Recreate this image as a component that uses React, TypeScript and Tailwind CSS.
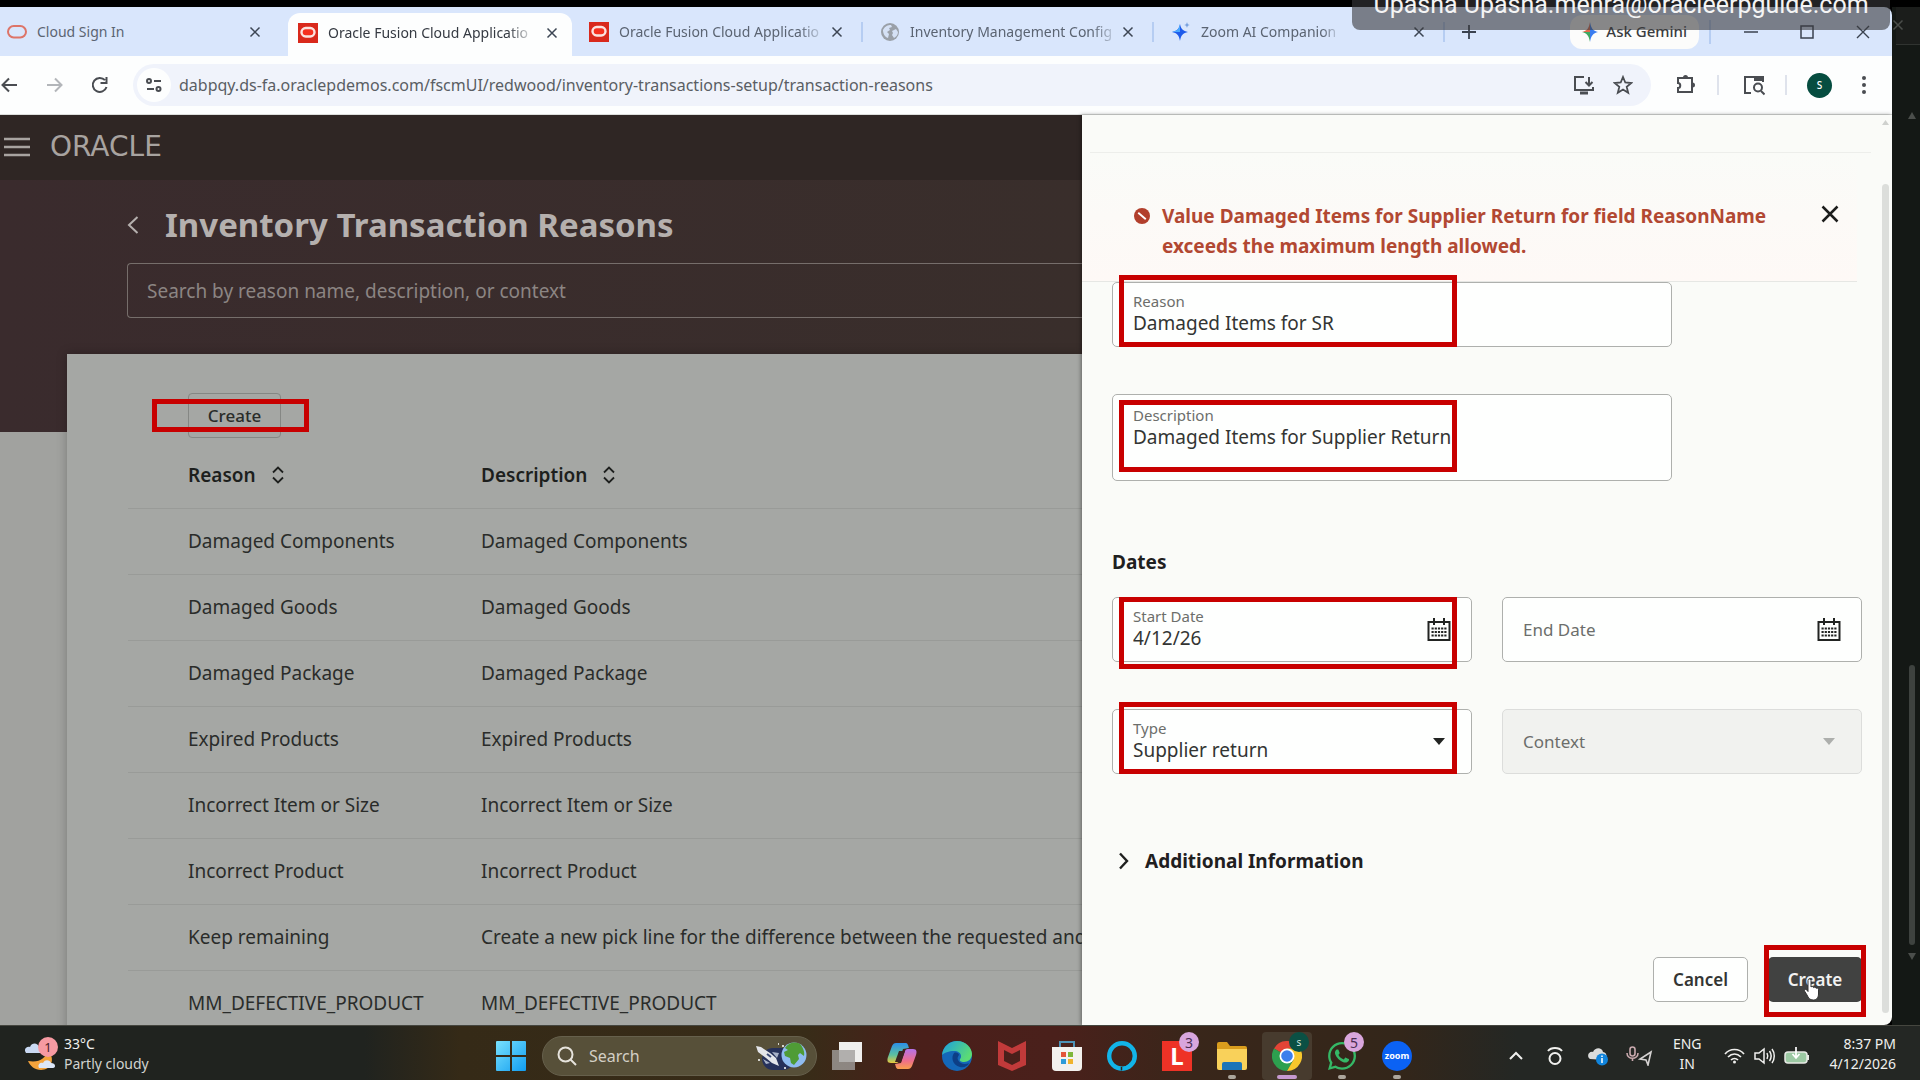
import type { ReactNode } from "react";
import { FaWhatsapp } from "react-icons/fa";

const reasons = [
  ["Damaged Components", "Damaged Components"],
  ["Damaged Goods", "Damaged Goods"],
  ["Damaged Package", "Damaged Package"],
  ["Expired Products", "Expired Products"],
  ["Incorrect Item or Size", "Incorrect Item or Size"],
  ["Incorrect Product", "Incorrect Product"],
  ["Keep remaining", "Create a new pick line for the difference between the requested and picked quantity"],
  ["MM_DEFECTIVE_PRODUCT", "MM_DEFECTIVE_PRODUCT"],
];

function OracleFavicon() {
  return (
    <svg className="h-5 w-5 shrink-0" viewBox="0 0 20 20" aria-hidden="true">
      <rect width="20" height="20" fill="#d9291c" />
      <rect x="3.5" y="5" width="13" height="8.500" rx="4.250" fill="#f5301f" stroke="#fbe3df" strokeWidth="2.400" />
    </svg>
  );
}

function OracleRing() {
  return (
    <svg className="h-5 w-5 shrink-0" viewBox="0 0 20 20" aria-hidden="true">
      <rect x="1" y="4" width="18" height="11.500" rx="5.750" fill="none" stroke="#dd7468" strokeWidth="2" />
    </svg>
  );
}

function Globe() {
  return (
    <svg className="h-5 w-5 shrink-0" viewBox="0 0 20 20" aria-hidden="true">
      <circle cx="10" cy="10" r="9" fill="#9aa0a8" />
      <path d="M3 8c2-4 5-5 8-5l1 2-3 1 1 2-3 2 2 2-1 4c-3-1-5-4-5-8zM12 9l4-2 2 3c0 3-2 5-4 6l-2-3 1-2z" fill="#d5e1f5" />
    </svg>
  );
}

function Sparkle() {
  return (
    <svg className="h-5 w-5 shrink-0" viewBox="0 0 20 20" aria-hidden="true">
      <path d="M9 2c1 5 3 7 8 8-5 1-7 3-8 9-1-6-3-8-8-9 5-1 7-3 8-8z" fill="#1f5bea" />
      <path d="M1 10c5-1 7-3 8-8v8z" fill="#4aa8ff" />
      <path d="M16 0c.4 2 1 2.600 3 3-2 .4-2.600 1-3 3-.4-2-1-2.600-3-3 2-.4 2.600-1 3-3z" fill="#7ba3de" />
    </svg>
  );
}

function Cross({ className }: { className: string }) {
  return (
    <svg className={className} viewBox="0 0 16 16" fill="none" stroke="currentColor" strokeWidth="2" aria-hidden="true">
      <path d="M2 2l12 12M14 2L2 14" />
    </svg>
  );
}

function Tab({ title, icon, active, divider }: { title: string; icon: ReactNode; active?: boolean; divider?: boolean }) {
  return (
    <div
      className={
        active
          ? "flex h-[43px] w-[284px] items-center self-end rounded-t-xl bg-[#fdfefe] pr-[10px] pb-1 pl-[10px] text-[#353a42]"
          : "flex w-[291px] items-center pr-[10px] pl-[17px] text-[#5b6472]"
      }
    >
      <button type="button" className="flex flex-1 items-center gap-[10px] text-left">
        {icon}
        <span
          className={
            divider || active
              ? "whitespace-nowrap text-[14px] [mask-image:linear-gradient(to_right,#000_90%,#0004)]"
              : "whitespace-nowrap text-[14px]"
          }
        >
          {title}
        </span>
      </button>
      <button type="button" aria-label={"Close " + title} className="p-1 text-[#3d4654]">
        <Cross className="h-3 w-3" />
      </button>
      <span className={divider ? "-mr-[10px] ml-[14px] h-5 w-[2px] bg-[#b6cdf2]" : active ? "hidden" : "-mr-[10px] ml-[14px] w-[2px]"} />
    </div>
  );
}

function TabStrip() {
  return (
    <div className="flex h-[49px] items-stretch bg-[#d9e6fc]">
      <div className="-ml-[10px] flex">
        <Tab title="Cloud Sign In" icon={<OracleRing />} />
      </div>
      <div className="ml-[7px] flex">
        <Tab title="Oracle Fusion Cloud Applicatio" icon={<OracleFavicon />} active />
      </div>
      <Tab title="Oracle Fusion Cloud Applicatio" icon={<OracleFavicon />} divider />
      <Tab title="Inventory Management Config" icon={<Globe />} divider />
      <Tab title="Zoom AI Companion" icon={<Sparkle />} divider />
      <button type="button" aria-label="New tab" className="ml-4 flex items-center text-[#3a424f]">
        <svg className="h-4 w-4" viewBox="0 0 16 16" stroke="currentColor" strokeWidth="1.800" aria-hidden="true">
          <path d="M8 1v14M1 8h14" />
        </svg>
      </button>
      <div className="ml-auto flex items-center">
        <button type="button" className="flex h-[34px] items-center gap-2 rounded-xl bg-[#fcfcfb] px-3 text-[15px] font-medium text-[#3a3c40]">
          <svg className="h-5 w-4" viewBox="0 0 16 20" aria-hidden="true">
            <path d="M8 0c1 6 3 9 8 10-5 1-7 4-8 10z" fill="#3a7df0" />
            <path d="M8 0c-1 6-3 9-8 10h8z" fill="#e36b4d" />
            <path d="M0 10c5 1 7 4 8 10V10z" fill="#3fa862" />
          </svg>
          Ask Gemini
        </button>
        <span className="ml-[10px] h-6 w-[2px] bg-[#b6cdf2]" />
        <button type="button" aria-label="Minimize" className="ml-7 p-1 text-[#3a424f]">
          <svg className="h-4 w-4" viewBox="0 0 16 16" stroke="currentColor" strokeWidth="1.500"><path d="M1 8h14" /></svg>
        </button>
        <button type="button" aria-label="Maximize" className="ml-8 p-1 text-[#3a424f]">
          <svg className="h-4 w-4" viewBox="0 0 16 16" fill="none" stroke="currentColor" strokeWidth="1.500"><rect x="2" y="2" width="12" height="12" /></svg>
        </button>
        <button type="button" aria-label="Close window" className="mr-[17px] ml-8 p-1 text-[#3a424f]">
          <svg className="h-4 w-4" viewBox="0 0 16 16" stroke="currentColor" strokeWidth="1.400"><path d="M2 2l12 12M14 2L2 14" /></svg>
        </button>
      </div>
    </div>
  );
}

function Toolbar() {
  return (
    <div className="flex h-[59px] items-center border-b border-[#dcdedc] bg-[#fdfefe] text-[#4a4d52]">
      <button type="button" aria-label="Back" className="ml-px">
        <svg className="h-4 w-4" viewBox="0 0 16 16" fill="none" stroke="currentColor" strokeWidth="2"><path d="M16 8H2M8 1.500L1.500 8 8 14.500" /></svg>
      </button>
      <button type="button" aria-label="Forward" className="ml-[30px] text-[#b3b6ba]">
        <svg className="h-4 w-4" viewBox="0 0 16 16" fill="none" stroke="currentColor" strokeWidth="2"><path d="M0 8h14M8 1.500L14.500 8 8 14.500" /></svg>
      </button>
      <button type="button" aria-label="Reload" className="ml-7">
        <svg className="h-[18px] w-[18px]" viewBox="0 0 18 18" fill="none" stroke="currentColor" strokeWidth="2">
          <path d="M15.500 11A7 7 0 1 1 14 4.200M15.500 1v6h-6" />
        </svg>
      </button>
      <div className="ml-6 flex h-[42px] flex-1 items-center rounded-full bg-[#f0f3fb] pr-[18px] pl-1">
        <button type="button" aria-label="Site information" className="flex h-[34px] w-[34px] items-center justify-center rounded-full bg-[#fdfefe]">
          <svg className="h-[18px] w-[18px]" viewBox="0 0 18 18" fill="none" stroke="currentColor" strokeWidth="2">
            <circle cx="4" cy="5" r="2" /><path d="M9 5h7M2 13h7" /><circle cx="13.500" cy="13" r="2" />
          </svg>
        </button>
        <input
          aria-label="Address"
          className="ml-2 min-w-0 flex-1 bg-transparent text-[16px] text-[#5a5e64] outline-none"
          defaultValue="dabpqy.ds-fa.oraclepdemos.com/fscmUI/redwood/inventory-transactions-setup/transaction-reasons"
        />
        <button type="button" aria-label="Install app" className="mr-[18px]">
          <svg className="h-[22px] w-[22px]" viewBox="0 0 22 22" fill="none" stroke="currentColor" strokeWidth="2">
            <path d="M11 3H2v13h18v-3M16 3v8M12.500 8l3.500 3.500L19.500 8" /><path d="M7 19h8" strokeWidth="3" />
          </svg>
        </button>
        <button type="button" aria-label="Bookmark">
          <svg className="h-5 w-5" viewBox="0 0 20 20" fill="none" stroke="currentColor" strokeWidth="1.800">
            <path d="M10 2l2.300 5.500 6 .5-4.600 3.900 1.500 5.900L10 14.600l-5.200 3.200 1.500-5.900L1.700 8l6-.5z" />
          </svg>
        </button>
      </div>
      <button type="button" aria-label="Extensions" className="ml-6">
        <svg className="h-[22px] w-[22px]" viewBox="0 0 22 22" fill="none" stroke="currentColor" strokeWidth="2">
          <path d="M3 4h14v14H3v-4c3 0 3-5 0-5z" /><path d="M8 3.500a2.500 2.500 0 0 1 5 0zM17.500 8.500a2.500 2.500 0 0 1 0 5z" fill="currentColor" stroke="none" />
        </svg>
      </button>
      <span className="ml-5 h-5 w-[2px] bg-[#dfe3ec]" />
      <button type="button" aria-label="Search tabs" className="ml-6">
        <svg className="h-[22px] w-[22px]" viewBox="0 0 22 22" fill="none" stroke="currentColor" strokeWidth="2">
          <path d="M8 19H2V3h18v5" /><path d="M11 5h8" strokeWidth="4" /><circle cx="15" cy="13.500" r="4" /><path d="M18 17l3.500 3.500" />
        </svg>
      </button>
      <span className="ml-5 h-5 w-[2px] bg-[#dfe3ec]" />
      <button type="button" aria-label="Profile" className="ml-5 flex h-[25px] w-[25px] items-center justify-center rounded-full bg-[#064d40] text-[10px] font-medium text-white">
        S
      </button>
      <button type="button" aria-label="Menu" className="mr-[18px] ml-[22px]">
        <svg className="h-5 w-5" viewBox="0 0 20 20" fill="currentColor"><circle cx="10" cy="3" r="2" /><circle cx="10" cy="10" r="2" /><circle cx="10" cy="17" r="2" /></svg>
      </button>
    </div>
  );
}

function SortIcon() {
  return (
    <svg className="h-[18px] w-3" viewBox="0 0 12 18" fill="none" stroke="currentColor" strokeWidth="1.800" aria-hidden="true">
      <path d="M1 6.500L6 1.500l5 5M1 11.500l5 5 5-5" />
    </svg>
  );
}

function ReasonsPage() {
  return (
    <section className="min-w-0 flex-1 overflow-hidden bg-[#a1a29f] whitespace-nowrap">
      <header className="flex h-[65px] items-center bg-[#2f2624] pb-[2px] pl-1 text-[#a8a3a0]">
        <button type="button" aria-label="Navigation menu">
          <svg className="h-5 w-[26px]" viewBox="0 0 26 20" stroke="currentColor" strokeWidth="2.500"><path d="M0 2h26M0 10h26M0 18h26" /></svg>
        </button>
        <span className="ml-5 font-['DejaVu_Sans'] text-[28px] leading-none">ORACLE</span>
      </header>
      <div className="h-[252px] bg-linear-to-r from-[#3a2b2d] to-[#392e2b] pt-[21px] pl-[127px]">
        <div className="flex items-center gap-[26px] text-[#b5b0ae]">
          <a href="#back" aria-label="Back">
            <svg className="h-[18px] w-3" viewBox="0 0 12 18" fill="none" stroke="currentColor" strokeWidth="2"><path d="M10.500 1L2 9l8.500 8" /></svg>
          </a>
          <h1 className="text-[33px] leading-[48px] font-bold">Inventory Transaction Reasons</h1>
        </div>
        <input
          type="search"
          aria-label="Search by reason name, description, or context"
          placeholder="Search by reason name, description, or context"
          className="mt-[14px] block h-[55px] w-full rounded-l border border-r-0 border-[#766e6b] bg-transparent pl-[19px] text-[19px] outline-none placeholder:text-[#8c8583]"
        />
      </div>
      <div className="-mt-[78px] ml-[67px] min-h-[800px] bg-[#a5a7a4] pt-[39px] pl-[61px] text-[#2a2c2a] shadow-[0_0_10px_rgba(0,0,0,0.25)]">
        <div className="relative ml-[60px] w-fit">
          <button type="button" className="block h-[45px] w-[93px] rounded border border-[#858784] text-[17px] font-medium">
            Create
          </button>
          <span className="pointer-events-none absolute top-[6px] -left-9 h-[33px] w-[157px] border-[5px] border-[#c80000]" />
        </div>
        <table className="w-full table-fixed text-left text-[19px]">
          <thead>
            <tr className="h-[70px] border-b border-[#999b98] text-[#1d1f1d]">
              <th className="w-[353px] pt-1 pl-[60px] font-semibold"><button type="button" className="flex items-center gap-4">Reason <SortIcon /></button></th>
              <th className="pt-1 font-semibold"><button type="button" className="flex items-center gap-4">Description <SortIcon /></button></th>
            </tr>
          </thead>
          <tbody>
            {reasons.map(([name, description]) => (
              <tr key={name} className="h-[66px] border-b border-[#999b98]">
                <td className="pl-[60px]">{name}</td>
                <td className="overflow-hidden">{description}</td>
              </tr>
            ))}
          </tbody>
        </table>
      </div>
    </section>
  );
}

function Highlight({ className }: { className: string }) {
  return <span className={"pointer-events-none absolute border-[5px] border-[#c80000] " + className} />;
}

function CalendarIcon() {
  return (
    <svg className="h-6 w-6" viewBox="0 0 24 24" fill="none" stroke="currentColor" aria-hidden="true">
      <path d="M1.500 4h21v18h-21zM7 0v7M17 0v7" strokeWidth="2" />
      <path d="M4.500 10.500h15M4.500 14h15M4.500 17.500h15" strokeWidth="2.200" strokeDasharray="2.200 1" />
    </svg>
  );
}

function Caret({ className }: { className: string }) {
  return <svg className={className} viewBox="0 0 12 7" fill="currentColor" aria-hidden="true"><path d="M0 0h12L6 7z" /></svg>;
}

const box = "relative flex h-[65px] items-center rounded-[5px] border border-[#aeb0ad] bg-[#fefffe] pl-5";
const labelText = "block text-[15px] leading-5 text-[#6c6e6b]";
const valueText = "block w-full appearance-none bg-transparent text-[19px] leading-6 text-[#333533] outline-none";

function Drawer() {
  return (
    <aside className="relative flex w-[810px] shrink-0 flex-col bg-[#fafbf8] shadow-[-1px_0_4px_rgba(0,0,0,0.4)]">
      <div className="mr-[21px] ml-2 h-[38px] border-b border-[#edeeeb]" />
      <div role="alert" className="mr-[35px] flex h-[129px] items-start border-b border-[#e6e7e4] bg-linear-to-b from-[#fafbf8] to-[#fef9f6] pt-12 pl-[52px]">
        <svg className="mt-[7px] h-4 w-4" viewBox="0 0 17 17" aria-hidden="true">
          <circle cx="8.500" cy="8.500" r="8.500" fill="#b23f2c" /><path d="M4.500 5l8 7" stroke="#fff" strokeWidth="2" />
        </svg>
        <p className="ml-3 w-[640px] text-[19px] leading-[30px] font-bold text-[#b24832]">
          Value Damaged Items for Supplier Return for field ReasonName exceeds the maximum length allowed.
        </p>
        <button type="button" aria-label="Dismiss" className="mt-[3px] ml-auto pr-[17px] text-[#1c1d1c]"><Cross className="h-5 w-5" /></button>
      </div>
      <form className="flex flex-1 flex-col pr-[30px] pl-[30px]" onSubmit={(e) => e.preventDefault()}>
        <div className={box + " w-[560px]"}>
          <div className="flex-1 pb-[3px]">
            <label htmlFor="reason" className={labelText}>Reason</label>
            <input id="reason" className={valueText} defaultValue="Damaged Items for SR" />
          </div>
          <Highlight className="-top-2 left-[6px] h-[72px] w-[338px]" />
        </div>
        <div className="relative mt-[47px] h-[87px] w-[560px] rounded-[5px] border border-[#aeb0ad] bg-[#fefffe] pt-[10px] pl-5">
          <label htmlFor="description" className={labelText}>Description</label>
          <textarea id="description" className={valueText + " h-10 resize-none"} defaultValue="Damaged Items for Supplier Return" />
          <Highlight className="top-[5px] left-[6px] h-[72px] w-[338px]" />
        </div>
        <h2 className="mt-[66px] text-[19px] leading-[30px] font-bold text-[#1f201f]">Dates</h2>
        <div className="mt-5 grid grid-cols-2 gap-x-[30px] gap-y-[47px]">
          <div className={box + " pr-5"}>
            <div className="min-w-0 flex-1 pb-[3px]">
              <label htmlFor="start" className={labelText}>Start Date</label>
              <input id="start" className={valueText} defaultValue="4/12/26" />
            </div>
            <button type="button" aria-label="Choose start date" className="text-[#222422]"><CalendarIcon /></button>
            <Highlight className="-top-px left-[6px] h-[72px] w-[338px]" />
          </div>
          <div className={box + " pr-5"}>
            <label htmlFor="end" className="sr-only">End Date</label>
            <input id="end" placeholder="End Date" className="min-w-0 flex-1 bg-transparent text-[17px] outline-none placeholder:text-[#6c6e6b]" />
            <button type="button" aria-label="Choose end date" className="text-[#222422]"><CalendarIcon /></button>
          </div>
          <div className={box + " pr-[26px]"}>
            <div className="min-w-0 flex-1 pb-[3px]">
              <label htmlFor="type" className={labelText}>Type</label>
              <select id="type" className={valueText} defaultValue="Supplier return"><option>Supplier return</option></select>
            </div>
            <Caret className="h-[7px] w-3 text-[#222422]" />
            <Highlight className="-top-2 left-[6px] h-[72px] w-[338px]" />
          </div>
          <div className="flex h-[65px] items-center rounded-[5px] border border-[#dcdddb] bg-[#f1f2ef] pr-[26px] pl-5">
            <label htmlFor="context" className="sr-only">Context</label>
            <select id="context" disabled className="min-w-0 flex-1 appearance-none bg-transparent text-[17px] text-[#6c6e6b] opacity-100"><option>Context</option></select>
            <Caret className="h-[7px] w-3 text-[#adafac]" />
          </div>
        </div>
        <button type="button" className="mt-[72px] flex items-center gap-4 pl-[6px] text-[19px] leading-[30px] font-bold text-[#1f201f]">
          <svg className="h-[18px] w-[11px]" viewBox="0 0 11 18" fill="none" stroke="currentColor" strokeWidth="2.400" aria-hidden="true"><path d="M2 1.500L9 9l-7 7.500" /></svg>
          Additional Information
        </button>
        <div className="mt-auto mb-[23px] flex justify-end gap-5 text-[17px] font-semibold">
          <button type="button" className="h-[45px] w-[95px] rounded-[5px] border border-[#aeb0ad] bg-[#fefffe] text-[#333533]">Cancel</button>
          <div className="relative">
            <button type="submit" className="h-[45px] w-[94px] rounded-[5px] bg-[#414241] text-[#f2f2f2]">Create</button>
            <Highlight className="-top-3 -left-1 h-[72px] w-[102px]" />
            <svg className="pointer-events-none absolute top-[21px] left-[35px] h-[23px] w-[18px]" viewBox="0 0 18 23" aria-hidden="true">
              <path d="M5 2.500a1.500 1.500 0 0 1 3 0V9c.5-.8 2.500-.6 2.600.6.700-.8 2.400-.4 2.500.7.900-.6 2.400 0 2.400 1.300V16c0 3-1.500 6-5 6-4 0-5-2-6.500-5L1.500 13c-.6-1.500 1.500-2.300 2.500-.8l1 1.300z" fill="#fff" stroke="#333" />
            </svg>
          </div>
        </div>
      </form>
      <div className="pointer-events-none absolute top-1 right-[3px] bottom-1 flex w-[7px] flex-col items-center">
        <svg className="h-[7px] w-[7px]" viewBox="0 0 7 7"><path d="M3.500 1L7 6H0z" fill="#cfd1ce" /></svg>
        <span className="mt-[58px] mb-2 w-full flex-1 rounded bg-[#dcdedb]" />
      </div>
    </aside>
  );
}

function Edge() {
  return (
    <svg className="h-[30px] w-[30px]" viewBox="0 0 30 30" aria-hidden="true">
      <defs><linearGradient id="edgeTop" x1="0" y1="0" x2="1" y2="0.500"><stop stopColor="#1b9de2" /><stop offset="1" stopColor="#5bdc74" /></linearGradient></defs>
      <circle cx="15" cy="15" r="15" fill="#1467b8" />
      <path d="M0 14C1 5 8 0 15 0c9 0 15 7 15 13 0 5-4 8-8 8-3 0-5-1-4-3 1-1 1-2 1-3 0-3-3-5-7-5-5 0-10 2-12 4z" fill="url(#edgeTop)" />
      <path d="M12 12c-3 4-2 12 6 14 4 1 8-1 9-4-4 2-9 1-11-3-1-2 0-4 1-5 0-2-3-3-5-2z" fill="#0d3f86" />
    </svg>
  );
}

function Chrome() {
  return (
    <svg className="h-[30px] w-[30px]" viewBox="0 0 30 30" aria-hidden="true">
      <path d="M15 15L2 7.500A15 15 0 0 1 28 7.500H15z" fill="#e24436" />
      <path d="M15 15L2 7.500A15 15 0 0 0 15 30l6.500-11.200z" fill="#2da04f" />
      <path d="M15 7.500h13A15 15 0 0 1 15 30l6.500-11.200z" fill="#f8c72c" />
      <circle cx="15" cy="15" r="7.500" fill="#fff" /><circle cx="15" cy="15" r="5.800" fill="#3b7fec" />
    </svg>
  );
}

function Copilot() {
  return (
    <svg className="h-7 w-[30px]" viewBox="0 0 30 28" aria-hidden="true">
      <defs>
        <linearGradient id="copA" x1="0" y1="0" x2="0" y2="1"><stop stopColor="#2b8fe8" /><stop offset=".6" stopColor="#5cc0a0" /><stop offset="1" stopColor="#e8c83c" /></linearGradient>
        <linearGradient id="copB" x1="0" y1="0" x2="0" y2="1"><stop stopColor="#b472ea" /><stop offset=".6" stopColor="#ee6f8a" /><stop offset="1" stopColor="#f8a04c" /></linearGradient>
      </defs>
      <path d="M9 1h9c3 0 3 2 4 5l-6 1-4 12c-1 2-2 2-4 2H4c-4 0-4-3-3-6L5 4c1-2 2-3 4-3z" fill="url(#copA)" />
      <path d="M21 27h-9c-3 0-3-2-4-5l6-1 4-12c1-2 2-2 4-2h4c4 0 4 3 3 6l-4 11c-1 2-2 3-4 3z" fill="url(#copB)" />
      <path d="M12 9h6l-4 11H8z" fill="#3a2320" />
    </svg>
  );
}

function TaskIcon({ label, badge, badgeClass, mark, className, children }: { label: string; badge?: string; badgeClass?: string; mark?: string; className?: string; children: ReactNode }) {
  return (
    <button type="button" aria-label={label} className={"relative flex h-12 w-[50px] items-center justify-center rounded " + (className ?? "")}>
      {children}
      {badge && <span className={"absolute top-0 right-[3px] flex h-5 w-5 items-center justify-center rounded-full " + (badgeClass ?? "")}>{badge}</span>}
      {mark && <span className={"absolute bottom-px h-1 rounded-full " + mark} />}
    </button>
  );
}

function Taskbar() {
  return (
    <footer className="flex h-[55px] items-center overflow-hidden border-t border-[#45463f] bg-[linear-gradient(to_right,#20231f_0%,#20231f_19%,#352a17_24%,#382c18_42%,#4a1f1a_48%,#4a201b_55%,#39261a_62%,#33261a_73%,#242724_79%,#242724_100%)] pt-[6px] text-[#f0f0ee]">
      <button type="button" className="flex w-[496px] items-center gap-[6px] pb-1 pl-6 text-left">
        <svg className="h-9 w-[34px]" viewBox="0 0 34 36" aria-hidden="true">
          <path d="M2 17c-3-4 1-7 4-6 2-5 8-4 9 0 4 0 4 6 1 6z" fill="#c9d9f3" />
          <path d="M4 25c12 2 17-3 20-10 8 8 3 19-7 19-6 0-11-4-13-9z" fill="#f4a33b" />
          <path d="M15 32c-2-4 2-6 4-5 2-4 7-3 8 0 5 0 5 5 2 5z" fill="#dce7f9" />
          <circle cx="24" cy="11" r="10" fill="#f69aa2" />
          <text x="24" y="16" textAnchor="middle" fontSize="13" fill="#4c2027">1</text>
        </svg>
        <span className="text-[14px] leading-5">33°C<br /><span className="text-[#d2d3cf]">Partly cloudy</span></span>
      </button>
      <button type="button" aria-label="Start">
        <svg className="h-[30px] w-[30px]" viewBox="0 0 30 30" aria-hidden="true">
          <defs><linearGradient id="win" x1="0" y1="0" x2="1" y2="1"><stop stopColor="#79e1fd" /><stop offset="1" stopColor="#119df0" /></linearGradient></defs>
          <path d="M0 1a1 1 0 0 1 1-1h13v14H0zM16 0h13a1 1 0 0 1 1 1v13H16zM0 16h14v14H1a1 1 0 0 1-1-1zM16 16h14v13a1 1 0 0 1-1 1H16z" fill="url(#win)" />
        </svg>
      </button>
      <label className="ml-4 flex h-10 w-[275px] items-center rounded-full border border-[#66604c] bg-[#575039] pr-2 pl-[14px]">
        <svg className="h-5 w-5" viewBox="0 0 20 20" fill="none" stroke="#e6e3dc" strokeWidth="2" aria-hidden="true"><circle cx="8.500" cy="8.500" r="7" /><path d="M13.500 13.500L19 19" /></svg>
        <input aria-label="Search" placeholder="Search" className="ml-3 w-[160px] bg-transparent text-[16px] outline-none placeholder:text-[#d3cfc5]" />
        <svg className="ml-auto h-8 w-[54px]" viewBox="0 0 54 32" aria-hidden="true">
          <rect x="8" y="8" width="32" height="22" rx="11" fill="#26315b" />
          <path d="M2 6l5 1 9 6 6 5 3 8-7-3-6-5-8-6z" fill="#e3e5ea" /><path d="M9 19l7 4-4 1zM18 12l5 6 2-5z" fill="#a8b2c8" />
          <path d="M13 14l4 3" stroke="#3c4a78" strokeWidth="2" /><path d="M4 20h2M28 6h2M30 28h2M24 4h1" stroke="#fff" strokeWidth="1.500" />
          <circle cx="40" cy="15" r="12.500" fill="#8fbcf0" />
          <path d="M31 8c4-6 12-7 16-3 2 3 4 7 3 11l-4-3-2 2 1 4-5 6-3-2-1-5-5-2-1-4 4-2z" fill="#4f9c36" />
        </svg>
      </label>
      <div className="ml-[5px] flex gap-[5px]">
        <TaskIcon label="Task view">
          <svg className="h-7 w-[30px]" viewBox="0 0 30 28"><rect x="7" width="23" height="20" fill="#efefed" /><rect y="8" width="23" height="20" fill="#a19f9c" fillOpacity=".8" /></svg>
        </TaskIcon>
        <TaskIcon label="Copilot"><Copilot /></TaskIcon>
        <TaskIcon label="Edge"><Edge /></TaskIcon>
        <TaskIcon label="McAfee">
          <svg className="h-[30px] w-7" viewBox="0 0 28 30"><path d="M0 0l14 7L28 0v24l-14 6-14-6zM6 9v11l8 4 8-4V9l-8 4z" fill="#c13a3a" fillRule="evenodd" /></svg>
        </TaskIcon>
        <TaskIcon label="Microsoft Store">
          <svg className="h-[30px] w-[30px]" viewBox="0 0 30 30"><path d="M8 7V1h14v6" fill="none" stroke="#4d93b8" strokeWidth="2" /><path d="M0 6h30v20a4 4 0 0 1-4 4H4a4 4 0 0 1-4-4z" fill="#f3f1ee" /><path d="M9 11h5v5H9z" fill="#e2543a" /><path d="M16 11h5v5h-5z" fill="#7eb63a" /><path d="M9 18h5v5H9z" fill="#2e9bd8" /><path d="M16 18h5v5h-5z" fill="#f0b32c" /></svg>
        </TaskIcon>
        <TaskIcon label="Alexa">
          <svg className="h-[30px] w-[30px]" viewBox="0 0 30 30" fill="none" stroke="#12b4e8">
            <circle cx="15" cy="15" r="12.800" strokeWidth="4.400" />
            <path d="M10 24l5 2.500c4-1 7-3 8.500-6l-1 5-8 3z" fill="#12b4e8" stroke="none" />
            <path d="M14.500 29.500V26" stroke="#33231a" strokeWidth="1.500" />
          </svg>
        </TaskIcon>
        <TaskIcon label="L app" badge="3" badgeClass="bg-[#d9a6dd] text-[14px] text-[#4a2d52]">
          <span className="flex h-[30px] w-[30px] items-center justify-center bg-[#ee3226] text-[24px] leading-none font-bold text-white">L</span>
        </TaskIcon>
        <TaskIcon label="File Explorer" mark="w-2 bg-[#aca69c]">
          <svg className="h-7 w-[30px]" viewBox="0 0 30 28"><path d="M0 2a2 2 0 0 1 2-2h8l3 4h15a2 2 0 0 1 2 2v10H0z" fill="#d99d1d" /><path d="M0 7h30v19a2 2 0 0 1-2 2H2a2 2 0 0 1-2-2z" fill="#f9d15a" /><path d="M5 28v-6a2 2 0 0 1 2-2h16a2 2 0 0 1 2 2v6z" fill="#1b74b8" /></svg>
        </TaskIcon>
        <TaskIcon label="Chrome" badge="s" badgeClass="bg-[#0b5044] text-[10px] text-[#cfe5de]" mark="w-5 bg-[#c69ad0]" className="bg-[#473b2e]"><Chrome /></TaskIcon>
        <TaskIcon label="WhatsApp" badge="5" badgeClass="bg-[#d9a6dd] text-[14px] text-[#4a2d52]" mark="w-2 bg-[#aca69c]"><FaWhatsapp className="h-[32px] w-[32px] text-[#35b866]" /></TaskIcon>
        <TaskIcon label="Zoom" mark="w-2 bg-[#aca69c]">
          <span className="flex h-[30px] w-[30px] items-center justify-center rounded-full bg-[#0b62f4] text-[9px] font-bold text-white">zoom</span>
        </TaskIcon>
      </div>
      <div className="mr-6 ml-auto flex items-center text-[14px] leading-5">
        <svg className="h-4 w-[14px]" viewBox="0 0 14 16" fill="none" stroke="currentColor" strokeWidth="2"><path d="M1 11l6-6 6 6" /></svg>
        <svg className="ml-6 h-5 w-4" viewBox="0 0 16 20" fill="none" stroke="currentColor" strokeWidth="2"><circle cx="8" cy="12.500" r="5.500" /><path d="M1 5c3-4 11-4 14 0" /></svg>
        <svg className="ml-6 h-5 w-[22px]" viewBox="0 0 22 20"><path d="M3 13c-4-3-1-8 3-7 2-5 9-5 10 0 4 0 5 7 1 8z" fill="#dcdddc" /><circle cx="15" cy="13.500" r="6" fill="#1084dc" /><path d="M15 12v5M15 9.500v1.500" stroke="#fff" strokeWidth="1.500" /></svg>
        <svg className="ml-[17px] h-5 w-[27px]" viewBox="0 0 27 20" fill="none" stroke="#c9a9ae" strokeWidth="1.600"><rect x="4" y="1" width="5" height="9" rx="2.500" /><path d="M1 7c0 7 11 7 11 0M6.500 12v3" /><path d="M25 6L14 13l6 1 2 5z" stroke="#d5d2d2" /></svg>
        <span className="ml-5 pb-1 text-center">ENG<br />IN</span>
        <svg className="ml-[22px] h-4 w-[21px]" viewBox="0 0 21 16" fill="none" stroke="currentColor" strokeWidth="1.700"><path d="M1 6c5-6 14-6 19 0M4 9c4-4 9-4 13 0M7 12c2-2 5-2 7 0" /><circle cx="10.500" cy="14" r="1.500" fill="currentColor" stroke="none" /></svg>
        <svg className="ml-[9px] h-[18px] w-[21px]" viewBox="0 0 21 18" fill="none" stroke="currentColor" strokeWidth="1.500"><path d="M1 6h4l5-4v14l-5-4H1zM13 6c1 2 1 4 0 6M15.500 4c2 3 2 7 0 10M18 2c3 4 3 10 0 14" /></svg>
        <svg className="ml-[9px] h-[18px] w-[26px]" viewBox="0 0 26 18"><rect x="1" y="5" width="22" height="11" rx="3" fill="#9cc9a3" stroke="#e7e9e5" strokeWidth="1.500" /><path d="M24 8v5" stroke="#e7e9e5" strokeWidth="2" /><path d="M12 0v10M8.500 7l3.500 4 3.500-4" stroke="#fff" strokeWidth="1.700" fill="none" /></svg>
        <span className="ml-5 pb-1 text-right">8:37 PM<br />4/12/2026</span>
      </div>
    </footer>
  );
}

export default function App() {
  return (
    <div className="relative flex h-screen flex-col overflow-hidden bg-black font-['Noto_Sans',sans-serif]">
      <div className="flex min-h-0 flex-1 pt-[7px]">
        <div className="flex min-w-0 flex-1 flex-col overflow-hidden rounded-tr-lg rounded-br-lg">
          <TabStrip />
          <Toolbar />
          <main className="flex min-h-0 flex-1">
            <ReasonsPage />
            <Drawer />
          </main>
        </div>
        <div className="flex w-7 shrink-0 flex-col items-end bg-[#141815] pr-1 text-[#4b4e4b]">
          <div className="-mr-1 h-[38px] w-full border-b border-[#303330] bg-[#1b1d1b] pt-3"><Cross className="-ml-1 h-3 w-3" /></div>
          <svg className="mt-[67px] h-2 w-2" viewBox="0 0 8 8" fill="currentColor"><path d="M4 0l4 7H0z" /></svg>
          <span className="mt-auto mr-px h-[280px] w-[6px] rounded bg-[#3e423f]" />
          <svg className="mt-2 mb-[64px] h-2 w-2" viewBox="0 0 8 8" fill="currentColor"><path d="M0 0h8L4 7z" /></svg>
        </div>
      </div>
      <Taskbar />
      <div className="pointer-events-none absolute top-0 right-[30px] flex h-[30px] w-[538px] items-end justify-center rounded-b-lg bg-[#38393c]/60 font-[Roboto,sans-serif] text-[25px] whitespace-nowrap text-[#f4f4f4]">
        <span className="pb-[10px] leading-[30px]">Upasha Upasha.mehra@oracleerpguide.com</span>
      </div>
    </div>
  );
}
